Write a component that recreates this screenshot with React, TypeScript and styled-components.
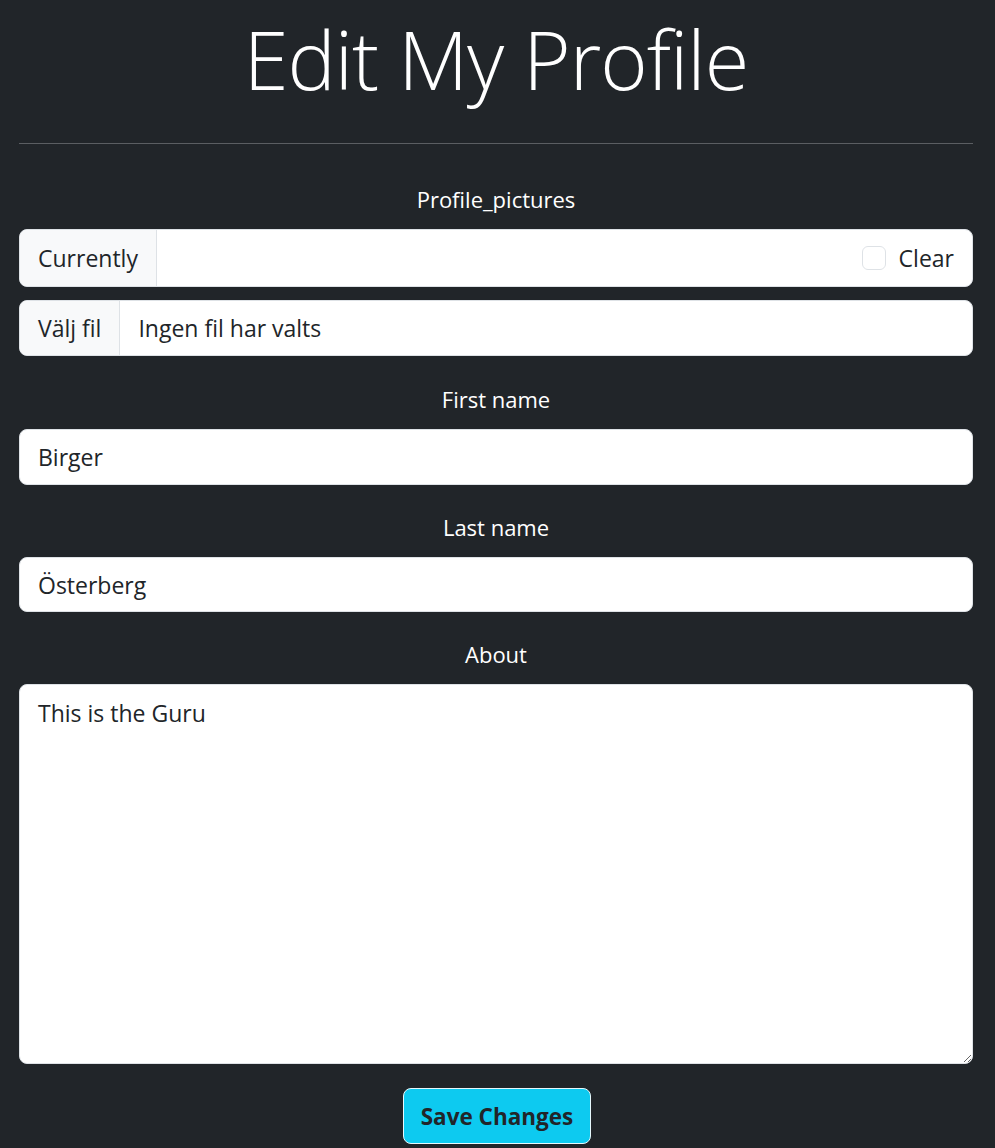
import React from 'react'
import styled, { createGlobalStyle } from 'styled-components'

const font = `"Open Sans", "Noto Sans", "Liberation Sans", sans-serif`

const GlobalStyle = createGlobalStyle`
  html, body {
    margin: 0;
    padding: 0;
    background: #212529;
  }
  body {
    font-family: ${font};
    color: #fff;
  }
  * {
    box-sizing: border-box;
  }
`

const Page = styled.main`
  padding: 9px 22px 0 19px;
  min-height: 1148px;
`

const Title = styled.h1`
  margin: 0;
  font-weight: 300;
  font-size: 81px;
  line-height: 100px;
  text-align: center;
  letter-spacing: -1px;
`

const Rule = styled.hr`
  margin: 34px 0 39px;
  border: 0;
  border-top: 1px solid #5b5e62;
`

const Form = styled.form`
  display: flex;
  flex-direction: column;
`

const Field = styled.div<{ $gap?: number }>`
  display: flex;
  flex-direction: column;
  margin-bottom: ${(p) => p.$gap ?? 26}px;
`

const Label = styled.label`
  display: block;
  text-align: center;
  font-size: 22px;
  line-height: 36px;
  margin: -2px 0 12px;
  color: #fff;
`

const Group = styled.div<{ $h: number; $mb?: number }>`
  display: flex;
  align-items: stretch;
  height: ${(p) => p.$h}px;
  margin-bottom: ${(p) => p.$mb ?? 0}px;
  background: #fff;
  border: 1px solid #dee2e6;
  border-radius: 8px;
  overflow: hidden;
  color: #212529;
  font-size: 23px;
`

const Addon = styled.span`
  display: flex;
  align-items: center;
  padding: 0 18px;
  background: #f8f9fa;
  border-right: 1px solid #dee2e6;
  white-space: nowrap;
`

const GroupBody = styled.span`
  flex: 1;
  display: flex;
  align-items: center;
  padding: 0 18px;
`

const ClearBox = styled.span`
  display: flex;
  align-items: center;
  gap: 13px;
  margin-left: auto;
`

const Check = styled.span`
  width: 24px;
  height: 24px;
  border: 1px solid #dee2e6;
  border-radius: 6px;
  background: #fff;
`

const TextInput = styled.input<{ $h?: number }>`
  height: ${(p) => p.$h ?? 56}px;
  padding: 0 18px;
  border: 1px solid #dee2e6;
  border-radius: 8px;
  font-family: ${font};
  font-size: 23px;
  color: #212529;
  background: #fff;
  outline: none;
`

const TextArea = styled.textarea`
  height: 380px;
  padding: 12px 18px;
  border: 1px solid #dee2e6;
  border-radius: 8px;
  font-family: ${font};
  font-size: 23px;
  line-height: 33px;
  color: #212529;
  background: #fff;
  outline: none;
`

const Actions = styled.div`
  display: flex;
  justify-content: center;
  padding-left: 2px;
`

const SaveButton = styled.button`
  height: 56px;
  padding: 0 17px;
  background: #0dcaf0;
  border: 1px solid #e6f8fc;
  border-radius: 8px;
  font-family: ${font};
  font-weight: 700;
  font-size: 22.5px;
  color: #212529;
`

export default function App() {
  return (
    <Page>
      <GlobalStyle />
      <Title>Edit My Profile</Title>
      <Rule />
      <Form onSubmit={(e) => e.preventDefault()}>
        <Field $gap={27}>
          <Label>Profile_pictures</Label>
          <Group $h={58} $mb={13}>
            <Addon>Currently</Addon>
            <GroupBody>
              <ClearBox>
                <Check />
                <span>Clear</span>
              </ClearBox>
            </GroupBody>
          </Group>
          <Group $h={56}>
            <Addon>Välj fil</Addon>
            <GroupBody>Ingen fil har valts</GroupBody>
          </Group>
        </Field>
        <Field>
          <Label htmlFor="first">First name</Label>
          <TextInput id="first" defaultValue="Birger" />
        </Field>
        <Field>
          <Label htmlFor="last">Last name</Label>
          <TextInput id="last" $h={55} defaultValue="Österberg" />
        </Field>
        <Field $gap={24}>
          <Label htmlFor="about">About</Label>
          <TextArea id="about" defaultValue="This is the Guru" />
        </Field>
        <Actions>
          <SaveButton type="submit">Save Changes</SaveButton>
        </Actions>
      </Form>
    </Page>
  )
}
